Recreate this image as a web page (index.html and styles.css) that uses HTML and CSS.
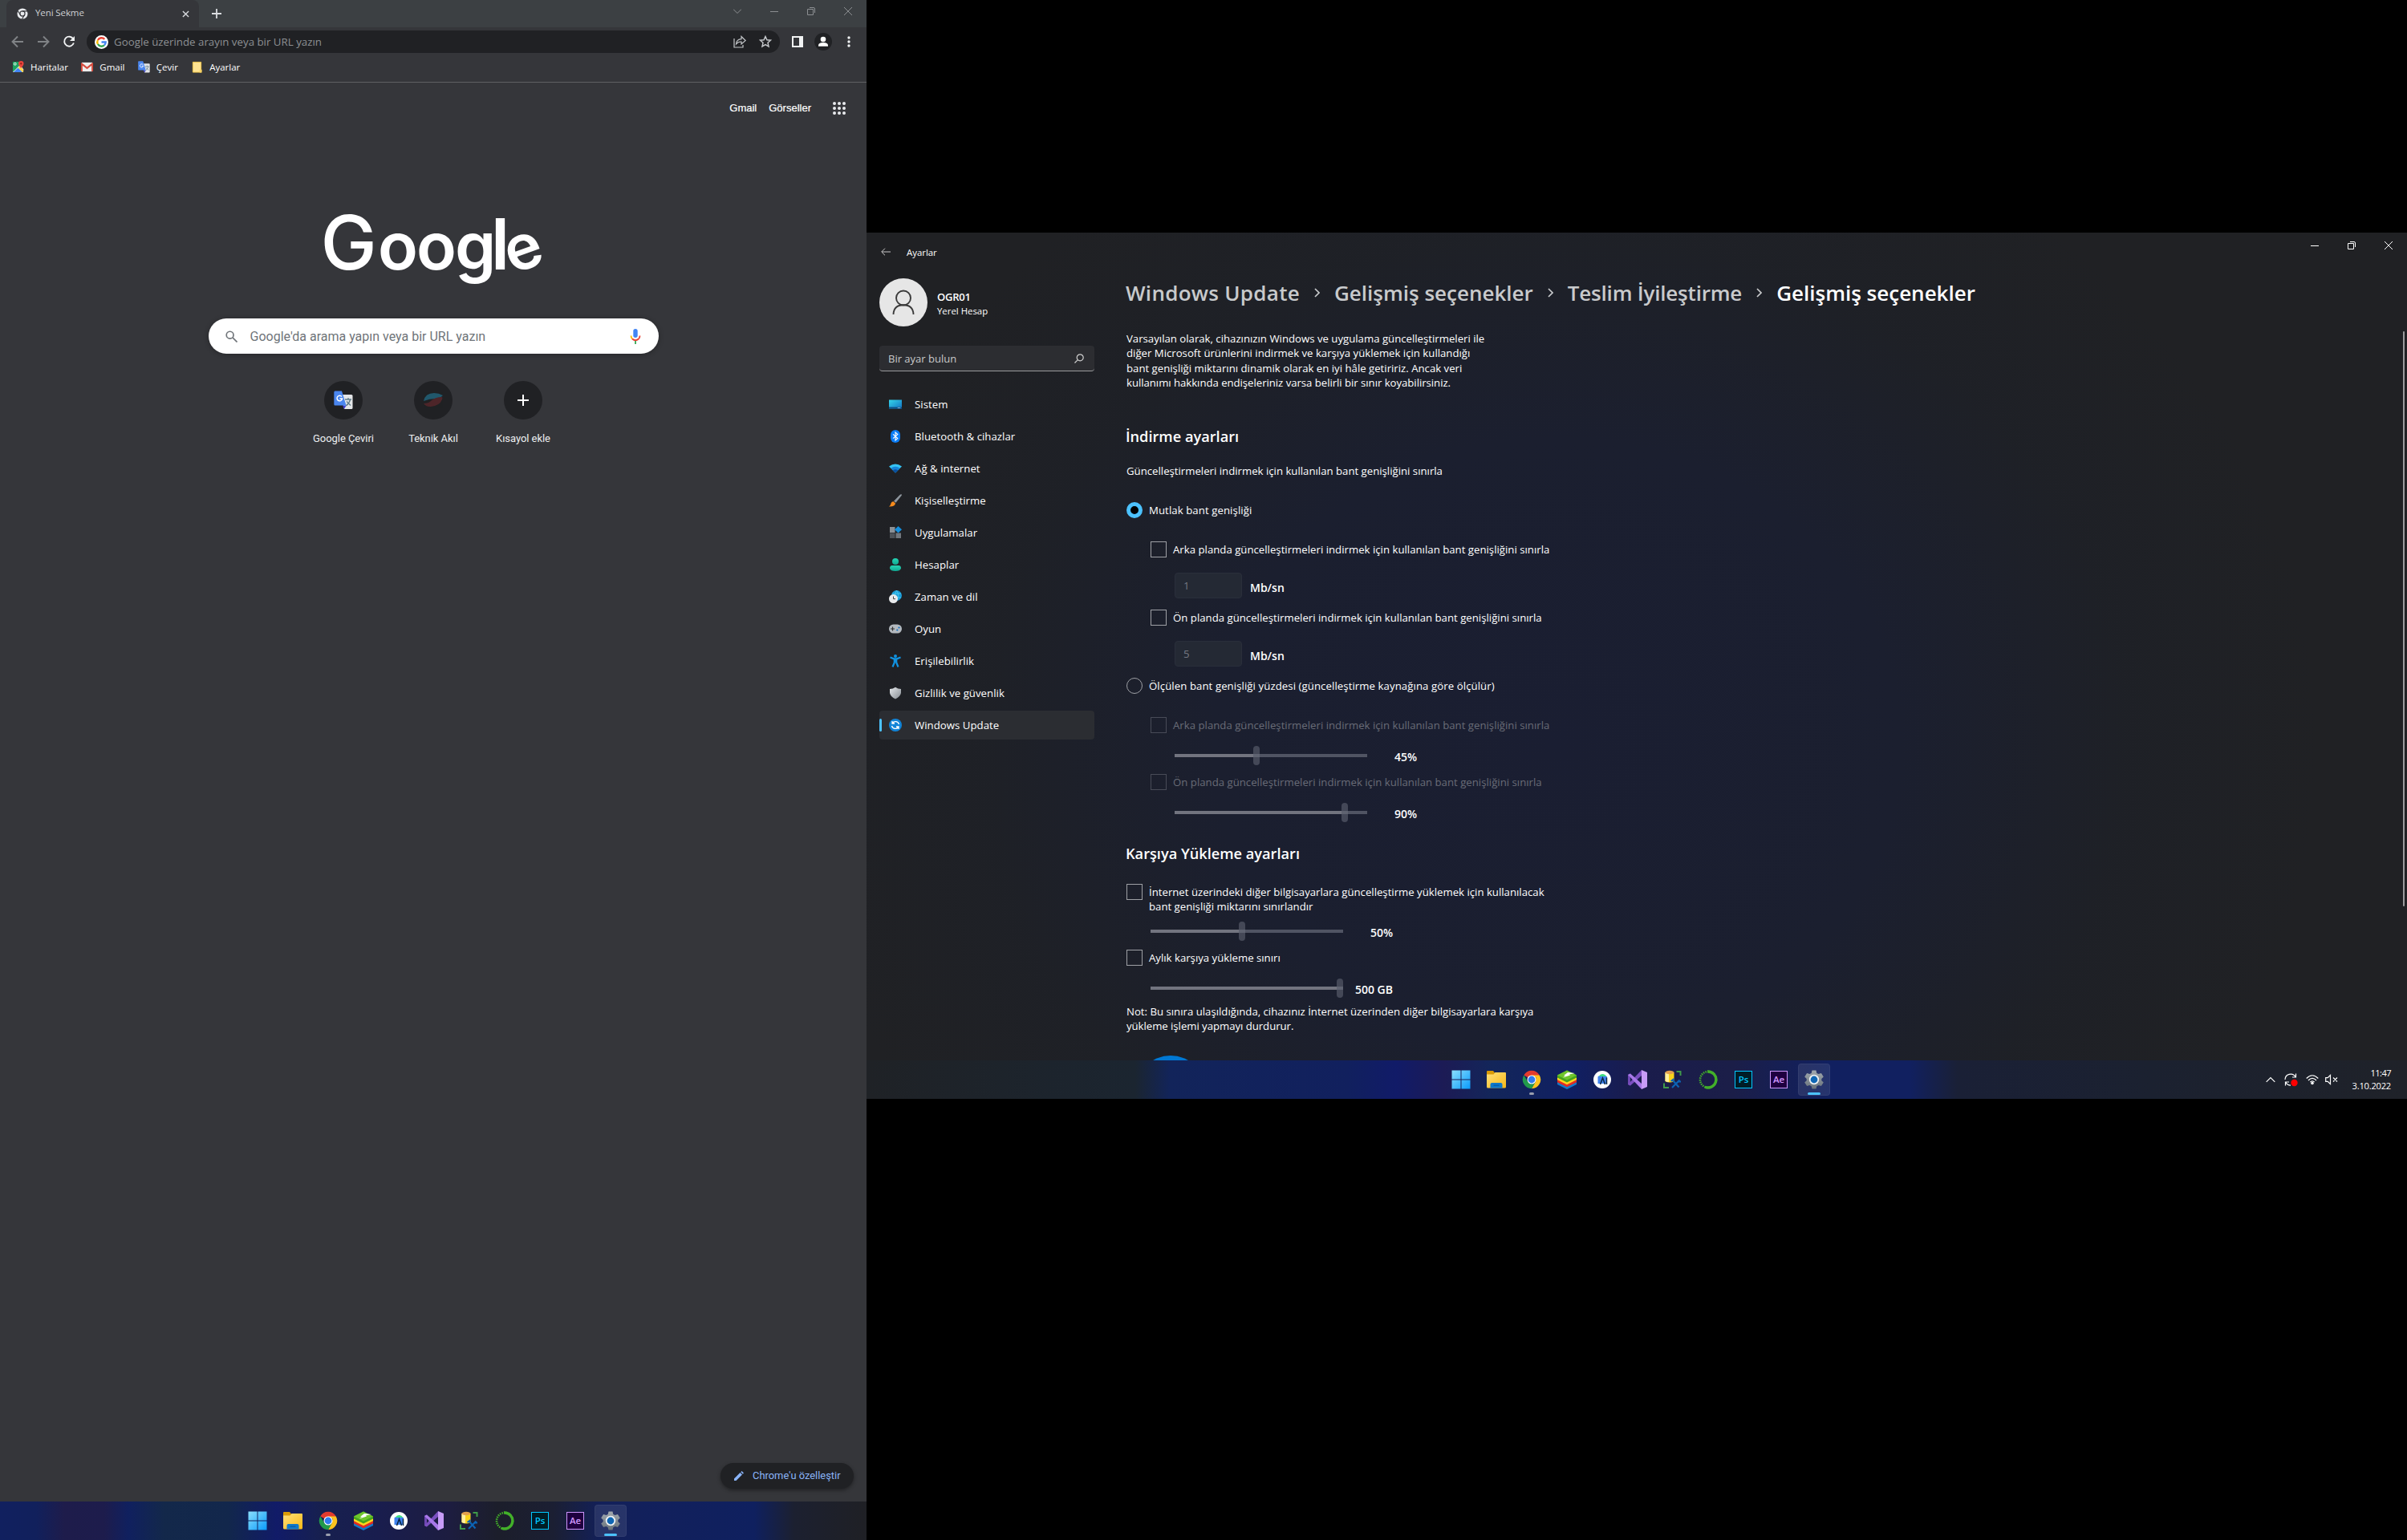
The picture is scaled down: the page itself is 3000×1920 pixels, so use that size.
FILE: index.html
```html
<!DOCTYPE html>
<html lang="tr">
<head>
<meta charset="utf-8">
<title>Masaüstü</title>
<link rel="stylesheet" href="styles.css">
</head>
<body>
<svg class="defs" width="0" height="0" aria-hidden="true">
  <defs>
    <linearGradient id="gwin" x1="0" y1="0" x2="1" y2="1"><stop offset="0" stop-color="#8be0fd"/><stop offset="1" stop-color="#0a9bfb"/></linearGradient>
    <linearGradient id="gfold" x1="0" y1="0" x2="1" y2="1"><stop offset="0" stop-color="#ffe07a"/><stop offset="1" stop-color="#f9b916"/></linearGradient>
    <linearGradient id="gsys" x1="0" y1="0" x2="1" y2="1"><stop offset="0" stop-color="#35d5ea"/><stop offset="1" stop-color="#1273c4"/></linearGradient>
    <linearGradient id="gtl" x1="0" y1="0" x2="0" y2="1"><stop offset="0" stop-color="#25d3b4"/><stop offset="1" stop-color="#10a892"/></linearGradient>
    <linearGradient id="ggrey" x1="0" y1="0" x2="1" y2="1"><stop offset="0" stop-color="#e6e9ec"/><stop offset="1" stop-color="#858b92"/></linearGradient>
    <linearGradient id="ggear" x1="0" y1="0" x2="0" y2="1"><stop offset="0" stop-color="#a2a9af"/><stop offset="1" stop-color="#68727b"/></linearGradient>
  </defs>
  <symbol id="i-start" viewBox="0 0 24 24"><path fill="url(#gwin)" d="M.5.5h11v11H.5zM12.5.5h11v11h-11zM.5 12.5h11v11H.5zM12.5 12.5h11v11h-11z"/></symbol>
  <symbol id="i-folder" viewBox="0 0 24 24"><path fill="#d99a06" d="M0 2.2C0 1.4.5 1 1.200 1H8l2 2.500V6H0z"/><path fill="url(#gfold)" d="M0 5.500h8.500L10.500 3H23q1 0 1 1v17q0 1.500-1.500 1.500h-21Q0 22.500 0 21z"/><path fill="#0f78cb" d="M4.500 22.500V18q0-2 2-2h11q2 0 2 2v4.500z"/><path fill="#085a9f" d="M8.500 18.500h7v1.200h-7z"/></symbol>
  <symbol id="i-chrome" viewBox="0 0 24 24"><path fill="#e23b2e" d="M2.300 6.400A11.200 11.200 0 0 1 21.700 6.400L12 12z"/><path fill="#fcc31e" d="M21.700 6.400A11.200 11.200 0 0 1 12 23.200L16.600 14.800 17.500 9.500 12 6.400z"/><path fill="#219a4b" d="M2.300 6.400A11.200 11.200 0 0 0 12 23.200L16.800 14.800 12 17.400 7.200 14.800z"/><circle cx="12" cy="12" r="5.500" fill="#fff"/><circle cx="12" cy="12" r="4.400" fill="#2f7cf0"/></symbol>
  <symbol id="i-stack" viewBox="0 0 24 24"><path fill="#1179c9" d="M0 15l12 5.500L24 15v3l-12 6L0 18z"/><path fill="#e32b24" d="M0 12l12 5.500L24 12v3.200l-12 6-12-6z"/><path fill="#ffd51e" d="M0 9l12 5.500L24 9v3.200l-12 6-12-6z"/><path fill="#46a51d" d="M12 .5 24 6.500v3l-12 6-12-6v-3z"/><path fill="#6ec52c" d="M12 .5 24 6.500l-12 6-12-6z"/><path fill="#fff" d="M8 7l5-4 9 1-7 1.500 1 1-9 3 3-2.500z"/></symbol>
  <symbol id="i-studio" viewBox="0 0 24 24"><circle cx="12" cy="12" r="11" fill="#fff"/><path fill="#3f82ee" d="M7.500 7.500h9q1.500 0 1.500 1.500v8H6.500V9q0-1.500 1-1.500z"/><path fill="#3ddc84" d="M8 8q1-3 5-3 3 .5 4 3z"/><path d="M9.500 18 12.500 10l3 8M17.500 9.500V18" fill="none" stroke="#0a2540" stroke-width="1.500"/></symbol>
  <symbol id="i-vs" viewBox="0 0 24 24"><path fill="#7048b4" d="M0 6 3 4.500V19.500L0 18z"/><path fill="#7a4fc0" d="M17 0v7L3 19.500 0 18z"/><path fill="#a878e8" d="M0 6 3 4.500 17 17v7z"/><path fill="#c79cf7" d="M17 0l7 3v18l-7 3z"/></symbol>
  <symbol id="i-db" viewBox="0 0 24 24"><path fill="#fbd31b" d="M2.500 3h11v11q-5.500 3-11 0z"/><path fill="#fff0a0" d="M2.500 3h4.500v12q-3 0-4.500-1z"/><ellipse cx="8" cy="3" rx="5.500" ry="2.200" fill="#e3a04d"/><path d="M16.500 2H21.500V7M1 16.500V22H7" fill="none" stroke="#3f9a4a" stroke-width="2"/><path d="M11.500 12.500 19.500 21.500M20.500 12.500 11 22" stroke="#0c63b4" stroke-width="2.200"/><path d="M9.500 14l4-3M18 14.500h4" stroke="#0c63b4" stroke-width="2"/></symbol>
  <symbol id="i-ring" viewBox="0 0 24 24"><path d="M11 2A10 10 0 1 1 8 21.200" fill="none" stroke="#43b02a" stroke-width="3.400"/><circle cx="12" cy="12" r="10" fill="none" stroke="#43b02a" stroke-width="2.600" stroke-dasharray="1.500 1.200"/></symbol>
  <symbol id="i-gear" viewBox="0 0 24 24"><path fill="url(#ggear)" d="M9.500.5h5l.8 3.400 2.200 1.200 3.400-1L23.800 8.500l-2.500 2.400v2.300l2.500 2.300-2.900 4.400-3.400-1-2.200 1.300-.8 3.300h-5l-.8-3.300-2.200-1.300-3.400 1L.2 15.500l2.500-2.300v-2.300L.2 8.500l2.900-4.400 3.400 1 2.200-1.200z"/><circle cx="12" cy="12" r="6.200" fill="#eef1f4"/><circle cx="12" cy="12" r="4.400" fill="#0f66b4"/></symbol>
  <symbol id="i-translate" viewBox="0 0 24 24"><path fill="#e4e6e8" d="M9 5h13q1.500 0 1.500 1.500v15q0 1.500-1.500 1.500H13z"/><path d="M14 11h8M18 9v2M20.500 11.500q-1.500 5-5.500 7.500M16 13.500l5 5" fill="none" stroke="#607d8b" stroke-width="1.300"/><path fill="#3a3ad0" d="M11 18.500h4.500L13 23z"/><path fill="#4a86f0" d="M1.500.5H10l5.500 18h-14Q.3 18.500.3 17V2Q.3.5 1.500.5z"/><path d="M10 7.500A3.300 3.300 0 1 0 10.600 10H7.500" fill="none" stroke="#fff" stroke-width="1.500"/></symbol>
  <symbol id="i-g" viewBox="0 0 16 16"><circle cx="8" cy="8" r="8" fill="#fff"/><g fill="none" stroke-width="2.200"><path stroke="#ea4335" d="M11.600 4.600A4.900 4.900 0 0 0 3.700 5.600"/><path stroke="#fbbc05" d="M3.700 5.600A4.900 4.900 0 0 0 3.700 10.400"/><path stroke="#34a853" d="M3.700 10.400A4.900 4.900 0 0 0 11.200 11.700"/><path stroke="#4285f4" d="M11.200 11.700A4.900 4.900 0 0 0 12.900 8H8"/></g></symbol>
</svg>

<div class="desktop">
  <section class="screen portrait">
    <header class="tabstrip">
      <div class="tab">
        <svg class="fav" viewBox="0 0 16 16"><circle cx="8" cy="8" r="7.500" fill="#e8eaed"/><circle cx="8" cy="8" r="3.500" fill="#e8eaed" stroke="#35363a" stroke-width="1.300"/><path d="M8 4.500h7M5 9.800 1.500 4M11 9.800 7.500 15.500" stroke="#35363a" stroke-width="1.300"/></svg>
        <span class="t tab-title">Yeni Sekme</span>
        <svg class="tab-x" viewBox="0 0 10 10"><path d="M1 1l8 8M9 1 1 9" stroke="#dadce0" stroke-width="1.500"/></svg>
      </div>
      <svg class="newtab" viewBox="0 0 12 12"><path d="M6 0v12M0 6h12" stroke="#dadce0" stroke-width="1.800"/></svg>
      <div class="winbtns dim">
        <svg viewBox="0 0 10 10"><path d="M0 2.500l5 5 5-5"/></svg>
        <svg viewBox="0 0 10 10"><path d="M0 5.500h10"/></svg>
        <svg viewBox="0 0 10 10"><path d="M.5 2.500h7v7h-7zM3 .5h5q1.500 0 1.500 1.500v5"/></svg>
        <svg viewBox="0 0 10 10"><path d="M0 0l10 10M10 0 0 10"/></svg>
      </div>
    </header>
    <div class="toolbar">
      <svg class="nav" viewBox="0 0 16 16"><path d="M15 8H2M8 1.500 1.500 8 8 14.500" stroke="#808386"/></svg>
      <svg class="nav" viewBox="0 0 16 16"><path d="M1 8h13M8 1.500 14.500 8 8 14.500" stroke="#808386"/></svg>
      <svg class="nav reload" viewBox="0 0 16 16"><path d="M13.300 4.500A6 6 0 1 0 13.900 9.500" stroke="#f1f3f4"/><path d="M15 1v6H9z" fill="#f1f3f4" stroke="none"/></svg>
      <div class="omnibox">
        <svg width="17" height="17"><use href="#i-g"/></svg>
        <span class="t omni-text">Google üzerinde arayın veya bir URL yazın</span>
        <svg class="share" viewBox="0 0 16 16"><path d="M1 4v11h11v-3M3.500 11Q4 5 10 4.700V1.500L15.200 6.500 10 11V8Q6 7.800 3.500 11z"/></svg>
        <svg class="star" viewBox="0 0 16 16"><path d="M8 1.500l1.900 4.300 4.600.4-3.500 3.100 1 4.600L8 11.500l-4 2.400 1-4.600L1.500 6.200l4.600-.4z"/></svg>
      </div>
      <svg class="panel" viewBox="0 0 14 14"><path fill="#f1f3f4" fill-rule="evenodd" d="M0 0h14v14H0zM2 2v10h7V2z"/></svg>
      <svg class="profile" viewBox="0 0 22 22"><circle cx="11" cy="11" r="11" fill="#202124"/><circle cx="11" cy="8" r="3.300" fill="#fff"/><path fill="#fff" d="M5 16.800v-1.300q0-3.500 6-3.500t6 3.500v1.300z"/></svg>
      <svg class="dots" viewBox="0 0 4 14"><g fill="#f1f3f4"><circle cx="2" cy="2" r="1.700"/><circle cx="2" cy="7" r="1.700"/><circle cx="2" cy="12" r="1.700"/></g></svg>
    </div>
    <div class="bookmarks">
      <a><svg viewBox="0 0 16 16"><path fill="#1da261" d="M1 1h10v5l-10 9z"/><path fill="#f5f5f5" d="M1 15 11 5l4 6v4z"/><path fill="#4285f4" d="M2 15l6-6 6 6z"/><path fill="#ffd54a" d="M8 9l3-3 4 6v3h-1z"/><path fill="#e8453c" d="M12 0a3.500 3.500 0 0 1 3.500 3.500Q15.500 6 12 9.500 8.500 6 8.500 3.500A3.500 3.500 0 0 1 12 0z"/><circle cx="4" cy="4" r="1.500" fill="none" stroke="#fff"/><circle cx="12" cy="3.500" r="1.200" fill="#8c1d17"/></svg><span class="t">Haritalar</span></a>
      <a><svg viewBox="0 0 16 16"><path fill="#eee" d="M1 2h14v12H1z"/><path fill="#d54b3d" d="M1 2.500Q.5 2 0 3v10.500l2 .5V6l6 4.800L14 6v8l2-.5V3q-.5-1-1-.5L8 8z"/></svg><span class="t">Gmail</span></a>
      <a><svg viewBox="0 0 24 24"><use href="#i-translate"/></svg><span class="t">Çevir</span></a>
      <a><svg viewBox="0 0 16 16"><path fill="#fee391" stroke="#f0c64a" d="M2.500 1.500h11V15h-11z"/><path fill="#f8d465" d="M11.500 11.500h3v4h-3z"/></svg><span class="t">Ayarlar</span></a>
    </div>
    <main class="ntp">
      <div class="ntp-links"><span class="t">Gmail</span><span class="t n2">Görseller</span>
        <svg viewBox="0 0 16 16"><g fill="#e8eaed"><circle cx="2" cy="2" r="2"/><circle cx="8" cy="2" r="2"/><circle cx="14" cy="2" r="2"/><circle cx="2" cy="8" r="2"/><circle cx="8" cy="8" r="2"/><circle cx="14" cy="8" r="2"/><circle cx="2" cy="14" r="2"/><circle cx="8" cy="14" r="2"/><circle cx="14" cy="14" r="2"/></g></svg>
      </div>
      <svg class="logo" viewBox="0 0 272 92"><text y="69" fill="#fff"><tspan class="lg-cap" x="-4.500">G</tspan><tspan class="lg-low" x="67 115 163">oog</tspan><tspan class="lg-asc" x="208">l</tspan><tspan class="lg-e" x="234.500" y="75" rotate="-20">e</tspan></text></svg>
      <div class="search">
        <svg class="mag" viewBox="0 0 16 16"><circle cx="6" cy="6" r="4.700"/><path d="M9.500 9.500l6 6"/></svg>
        <span class="t ph">Google'da arama yapın veya bir URL yazın</span>
        <svg class="mic" viewBox="0 0 14 20"><rect x="4.300" y="1" width="5.400" height="11" rx="2.700" fill="#4285f4"/><path d="M1.500 9.500Q1.500 12 3 13.500" stroke="#fbbc04"/><path d="M3 13.500Q7 17 11 13.500" stroke="#ea4335"/><path d="M11 13.500Q12.500 12 12.500 9.500" stroke="#ea4335"/><path d="M7 16v4" stroke="#34a853"/></svg>
      </div>
      <div class="tiles">
        <div class="tile"><i><svg width="24" height="24"><use href="#i-translate"/></svg></i><span class="t">Google Çeviri</span></div>
        <div class="tile"><i><svg width="26" height="20" viewBox="0 0 26 20"><path d="M1 11Q3 1 14 1q6 0 11 3-4 4-9 4Q8 8 1 11z" fill="#236f8c"/><path d="M1 14q6 0 9-3 5-5 14-5 1 1 0 3-3 8-14 9Q4 18.500 1 14z" fill="#62272d"/><path d="M2 0v20M4 0v20M6 0v20M8 0v20M10 0v20M12 0v20M14 0v20M16 0v20M18 0v20M20 0v20M22 0v20M24 0v20" stroke="#202124" stroke-width=".6"/></svg></i><span class="t">Teknik Akıl</span></div>
        <div class="tile"><i><svg width="14" height="14" viewBox="0 0 14 14"><path d="M7 0v14M0 7h14" stroke="#fff" stroke-width="2"/></svg></i><span class="t">Kısayol ekle</span></div>
      </div>
      <button class="customize"><svg viewBox="0 0 12 12"><path fill="#8ab4f8" d="M0 9.500 7.500 2 10 4.500 2.500 12H0zM8.300 1.200 9.500 0 12 2.500l-1.200 1.200z"/></svg><span class="t">Chrome'u özelleştir</span></button>
    </main>
    <footer class="taskbar tb-left">
      <div class="apps">
        <i><svg><use href="#i-start"/></svg></i><i><svg><use href="#i-folder"/></svg></i><i class="open"><svg><use href="#i-chrome"/></svg></i><i><svg><use href="#i-stack"/></svg></i><i><svg><use href="#i-studio"/></svg></i><i><svg><use href="#i-vs"/></svg></i><i><svg><use href="#i-db"/></svg></i><i><svg><use href="#i-ring"/></svg></i><i><b class="ps">Ps</b></i><i><b class="ae">Ae</b></i><i class="active"><svg><use href="#i-gear"/></svg></i>
      </div>
    </footer>
  </section>

  <section class="screen landscape">
    <div class="settings">
      <header class="titlebar">
        <svg class="back" viewBox="0 0 12 10"><path d="M12 5H1M5 .7.700 5 5 9.300"/></svg>
        <span class="t tt">Ayarlar</span>
        <div class="winbtns">
          <svg viewBox="0 0 10 10"><path d="M0 5.500h10"/></svg>
          <svg viewBox="0 0 10 10"><path d="M.5 2.500h7v7h-7zM3 .5h5q1.500 0 1.500 1.500v5"/></svg>
          <svg viewBox="0 0 10 10"><path d="M0 0l10 10M10 0 0 10"/></svg>
        </div>
      </header>
      <div class="body">
        <aside>
          <div class="user">
            <svg viewBox="0 0 60 60"><circle cx="30" cy="30" r="30" fill="#e6e6e6"/><g fill="none" stroke="#3a3a3a" stroke-width="1.900"><circle cx="30" cy="24.500" r="9"/><path d="M17.500 45Q18 33.300 30 33.300T42.500 45"/></g></svg>
            <div><span class="t u1">OGR01</span><span class="t u2">Yerel Hesap</span></div>
          </div>
          <div class="find"><span class="t">Bir ayar bulun</span><svg viewBox="0 0 12 12"><circle cx="7.200" cy="4.800" r="4"/><path d="M4.300 7.700.500 11.500"/></svg></div>
          <nav>
            <a><svg viewBox="0 0 16 16"><path fill="url(#gsys)" d="M0 2.500h16v11H0z"/><path fill="#0d4f86" d="M0 11.500h16v2H0z"/><path fill="#cfe8ff" d="M11 12h1v1h-1zM13 12h1v1h-1z"/></svg><span class="t">Sistem</span></a>
            <a><svg viewBox="0 0 16 16"><rect x="2" width="12" height="16" rx="6" fill="#0a7cf5"/><path d="M5 5.300 10.800 10.600 8 13V3l2.800 2.400L5 10.700" fill="none" stroke="#fff" stroke-width="1.100"/></svg><span class="t">Bluetooth &amp; cihazlar</span></a>
            <a><svg viewBox="0 0 16 16"><path fill="#35c3f3" d="M0 5.500Q8-.5 16 5.500L8 13.500z"/><path fill="#1683d8" d="M2.300 7.800Q8 3.500 13.700 7.800L8 13.500z"/><path fill="#0a4f9e" d="M4.800 10.300Q8 8 11.200 10.300L8 13.500z"/></svg><span class="t">Ağ &amp; internet</span></a>
            <a><svg viewBox="0 0 16 16"><path fill="#8d959d" d="M15.500.3Q16.300 1 15.500 2L8.500 10.800 6 8.800 13.500 1Q14.700-.2 15.500.3z"/><path fill="#f58a1c" d="M5.500 9.300 8 11.500Q7.500 16 0 15.500 2 14.500 2.300 12 3 9 5.500 9.300z"/></svg><span class="t">Kişiselleştirme</span></a>
            <a><svg viewBox="0 0 16 16"><path fill="#8b9096" d="M1 1h6.500v7H1z"/><path fill="#4e5359" d="M1 8.500h6.500V15H1z"/><path fill="#71777e" d="M8.500 8.500H15V15H8.500z"/><path fill="#1490df" d="M11.500 0 16 4.300l-4.500 4.200L7 4.300z"/></svg><span class="t">Uygulamalar</span></a>
            <a><svg viewBox="0 0 16 16"><g fill="url(#gtl)"><circle cx="8" cy="4" r="4"/><path d="M1 12.500Q1 9 4 9h8q3 0 3 3.500Q14 16 8 16T1 12.500z"/></g></svg><span class="t">Hesaplar</span></a>
            <a><svg viewBox="0 0 16 16"><circle cx="9.500" cy="6.500" r="6.500" fill="#1a9bd8"/><path d="M9.500 0Q6 6 9.500 13M9.500 0q4 6 0 13M4 4h11M4 9h11" stroke="#4fd2f2" fill="none" stroke-width=".8"/><circle cx="5.500" cy="10.500" r="5.500" fill="#e9ebed"/><path d="M5.500 7.500v3.200H8" stroke="#444" fill="none"/></svg><span class="t">Zaman ve dil</span></a>
            <a><svg viewBox="0 0 16 16"><rect y="2.500" width="16" height="11" rx="5.500" fill="#b3b9bf"/><path d="M2 8h5M4.500 5.500v5" stroke="#333" stroke-width="1.200"/><circle cx="12.500" cy="6.500" r="1.100" fill="#0f6cbd"/><circle cx="10.300" cy="9.500" r="1.100" fill="#0f6cbd"/></svg><span class="t">Oyun</span></a>
            <a><svg viewBox="0 0 16 16"><circle cx="8" cy="2" r="2" fill="#1192e0"/><path d="M1.500 3.500 6 5.300h4l4.500-1.800M8 5v4.500M6.800 5.500V10L4.500 15.500M9.200 5.500V10l2.300 5.500" stroke="#1192e0" stroke-width="2.200" fill="none"/></svg><span class="t">Erişilebilirlik</span></a>
            <a><svg viewBox="0 0 16 16"><path fill="url(#ggrey)" d="M8 .8Q11 3 15 3v5q-1 5-7 7.500Q2 13 1 8V3q4 0 7-2.200z"/></svg><span class="t">Gizlilik ve güvenlik</span></a>
            <a class="on"><svg viewBox="0 0 16 16"><circle cx="8" cy="8" r="8" fill="#1184d8"/><path d="M12.500 7A4.600 4.600 0 0 0 4.300 5.500M3.500 9a4.600 4.600 0 0 0 8.200 1.500M4 3v3h3M12 13v-3H9" fill="none" stroke="#fff" stroke-width="1.300"/></svg><span class="t">Windows Update</span></a>
          </nav>
        </aside>
        <main class="page">
          <h1><span class="t h1a">Windows Update</span><svg viewBox="0 0 7 12"><path d="M1 1l5 5-5 5"/></svg><span class="t">Gelişmiş seçenekler</span><svg viewBox="0 0 7 12"><path d="M1 1l5 5-5 5"/></svg><span class="t h1c">Teslim İyileştirme</span><svg viewBox="0 0 7 12"><path d="M1 1l5 5-5 5"/></svg><span class="t cur">Gelişmiş seçenekler</span></h1>
          <p class="intro"><span class="t">Varsayılan olarak, cihazınızın Windows ve uygulama güncelleştirmeleri ile</span><br><span class="t">diğer Microsoft ürünlerini indirmek ve karşıya yüklemek için kullandığı</span><br><span class="t">bant genişliği miktarını dinamik olarak en iyi hâle getiririz. Ancak veri</span><br><span class="t tight">kullanımı hakkında endişeleriniz varsa belirli bir sınır koyabilirsiniz.</span></p>
          <h2 class="h-down"><span class="t">İndirme ayarları</span></h2>
          <p class="sub"><span class="t">Güncelleştirmeleri indirmek için kullanılan bant genişliğini sınırla</span></p>
          <label class="row r-radio"><i class="radio sel"></i><span class="t loose">Mutlak bant genişliği</span></label>
          <label class="row in r-after"><i class="box"></i><span class="t">Arka planda güncelleştirmeleri indirmek için kullanılan bant genişliğini sınırla</span></label>
          <div class="num"><span class="field">1</span><strong class="t mb">Mb/sn</strong></div>
          <label class="row in r-tight"><i class="box"></i><span class="t">Ön planda güncelleştirmeleri indirmek için kullanılan bant genişliğini sınırla</span></label>
          <div class="num"><span class="field">5</span><strong class="t mb">Mb/sn</strong></div>
          <label class="row r-tight"><i class="radio"></i><span class="t loose">Ölçülen bant genişliği yüzdesi (güncelleştirme kaynağına göre ölçülür)</span></label>
          <label class="row in r-after off"><i class="box"></i><span class="t">Arka planda güncelleştirmeleri indirmek için kullanılan bant genişliğini sınırla</span></label>
          <div class="slide deep"><div class="track"><i style="width:98px"></i><b></b></div><strong class="t">45%</strong></div>
          <label class="row in r-slide off"><i class="box"></i><span class="t">Ön planda güncelleştirmeleri indirmek için kullanılan bant genişliğini sınırla</span></label>
          <div class="slide deep"><div class="track"><i style="width:208px"></i><b></b></div><strong class="t">90%</strong></div>
          <h2 class="h-up"><span class="t">Karşıya Yükleme ayarları</span></h2>
          <label class="row r-two"><i class="box"></i><span class="two"><span class="t">İnternet üzerindeki diğer bilgisayarlara güncelleştirme yüklemek için kullanılacak</span><br><span class="t">bant genişliği miktarını sınırlandır</span></span></label>
          <div class="slide near"><div class="track"><i style="width:110px"></i><b></b></div><strong class="t">50%</strong></div>
          <label class="row r-slide"><i class="box"></i><span class="t">Aylık karşıya yükleme sınırı</span></label>
          <div class="slide"><div class="track"><i style="width:232px"></i><b></b></div><strong class="t">500 GB</strong></div>
          <p class="note"><span class="t">Not: Bu sınıra ulaşıldığında, cihazınız İnternet üzerinden diğer bilgisayarlara karşıya</span><br><span class="t tight">yükleme işlemi yapmayı durdurur.</span></p>
          <div class="help"></div>
        </main>
        <div class="scroll"></div>
      </div>
    </div>
    <footer class="taskbar tb-right">
      <div class="apps">
        <i><svg><use href="#i-start"/></svg></i><i><svg><use href="#i-folder"/></svg></i><i class="open"><svg><use href="#i-chrome"/></svg></i><i><svg><use href="#i-stack"/></svg></i><i><svg><use href="#i-studio"/></svg></i><i><svg><use href="#i-vs"/></svg></i><i><svg><use href="#i-db"/></svg></i><i><svg><use href="#i-ring"/></svg></i><i><b class="ps">Ps</b></i><i><b class="ae">Ae</b></i><i class="active"><svg><use href="#i-gear"/></svg></i>
      </div>
      <div class="tray">
        <svg width="12" height="8" viewBox="0 0 12 8"><path d="M.700 6.800 6 1.500l5.300 5.300"/></svg>
        <svg class="sync" width="18" height="18" viewBox="0 0 18 18"><path d="M2 9A7 7 0 0 1 15 5.500M15.500 1.500v4.500H11M2.500 16.500V12H7M3 12.500Q5 16 9 16.200"/><circle cx="13.500" cy="13" r="4.200" fill="#f00" stroke="none"/></svg>
        <svg class="wifi" width="16" height="14" viewBox="0 0 16 14"><path d="M.700 5.500Q8-2 15.300 5.500M3 8Q8 2.800 13 8M5.300 10.200Q8 7.500 10.700 10.200"/><circle cx="8" cy="11.500" r="1.800" fill="#fff" stroke="none"/></svg>
        <svg class="mute" width="16" height="14" viewBox="0 0 16 14"><path d="M.700 4.700h2.500L6.500 1.500v11L3.200 9.300H.700zM10 4.500l5 5M15 4.500l-5 5"/></svg>
        <div class="clock"><span class="t c1">11:47</span><span class="t c2">3.10.2022</span></div>
      </div>
    </footer>
  </section>
</div>
</body>
</html>
```
FILE: styles.css
```css
* { box-sizing: border-box; }
body { margin: 0; background: #000; width: 3000px; height: 1920px; overflow: hidden; font-family: "Open Sans", "Noto Sans", sans-serif; color: #fff; }
svg { display: block; flex: none; }
.defs { position: absolute; }
.t { white-space: nowrap; }
i { font-style: normal; }
h1, h2, p { margin: 0; }
.desktop { display: flex; align-items: flex-start; }

/* Portrait screen: browser */
.portrait { width: 1080px; height: 1920px; display: flex; flex-direction: column; background: #35363a; }
.tabstrip { height: 34px; background: #3c4043; display: flex; align-items: flex-start; padding-left: 8px; }
.tab { width: 240px; height: 34px; background: #35363a; border-radius: 8px 8px 0 0; display: flex; align-items: center; padding: 0 12px 0 13px; }
.fav { width: 14px; height: 14px; }
.tab-title { font-size: 11.500px; line-height: 16px; color: #cfd1d4; margin-left: 9px; padding-bottom: 2px; letter-spacing: -.1px; flex: 1; }
.tab-x { width: 9px; height: 9px; }
.newtab { width: 12px; height: 12px; margin: 11px 0 0 16px; }
.winbtns { margin-left: auto; display: flex; gap: 36px; padding: 9px 18px 0 0; }
.winbtns svg { width: 10px; height: 10px; fill: none; stroke: #fff; stroke-width: 1; }
.winbtns.dim svg { stroke: #8c8f92; }
.toolbar { height: 36px; display: flex; align-items: center; padding-left: 14px; }
.nav { width: 16px; height: 16px; margin-right: 16px; fill: none; stroke-width: 1.900; }
.reload { margin-right: 14px; }
.omnibox { width: 864px; height: 28px; border-radius: 14px; background: #202124; display: flex; align-items: center; padding: 0 10px; }
.omni-text { font-size: 13.300px; color: #8d9093; margin-left: 7px; flex: 1; }
.share, .star { width: 16px; height: 16px; fill: none; stroke: #c4c7ca; stroke-width: 1.200; }
.star { margin-left: 16px; stroke-width: 1.500; }
.panel { width: 14px; height: 14px; margin-left: 15px; }
.profile { width: 22px; height: 22px; margin-left: 14px; }
.dots { width: 4px; height: 14px; margin-left: 19px; }
.bookmarks { height: 33px; border-bottom: 1px solid #5f6063; display: flex; padding: 6px 0 0 15px; }
.bookmarks a { display: flex; align-items: center; height: 15px; gap: 8px; font-size: 11.500px; }
.bookmarks a + a { margin-left: 16.300px; }
.bookmarks svg { width: 15px; height: 15px; }
.ntp { flex: 1; display: flex; flex-direction: column; align-items: center; position: relative; }
.ntp-links { align-self: flex-end; display: flex; align-items: center; height: 20px; margin: 22px 26px 0 0; font: 13px/20px "Liberation Sans", Arial, sans-serif; -webkit-text-stroke: .2px #fff; }
.n2 { margin-left: 15px; }
.ntp-links svg { width: 16px; height: 16px; margin-left: 27px; }
.logo { width: 272px; height: 92px; margin-top: 122px; overflow: visible; font-family: Inter, sans-serif; font-weight: 500; }
.lg-cap { font-size: 94px; }
.lg-low { font-size: 82px; font-weight: 600; }
.lg-e { font-size: 78px; font-weight: 600; }
.lg-asc { font-size: 88px; font-weight: 600; }
.search { width: 561px; height: 44px; margin-top: 38px; margin-left: 1px; background: #fff; border-radius: 22px; display: flex; align-items: center; padding: 0 22px 0 21px; box-shadow: 0 1px 6px rgba(0,0,0,.3); }
.mag { width: 15px; height: 15px; fill: none; stroke: #70757a; stroke-width: 1.800; }
.ph { font: 16px/20px Roboto, sans-serif; color: #70757a; margin-left: 15.500px; padding-top: 1px; flex: 1; }
.mic { width: 14px; height: 20px; fill: none; stroke-width: 1.800; }
.tiles { display: flex; margin-top: 34px; }
.tile { width: 112px; display: flex; flex-direction: column; align-items: center; font: 13px/16px Roboto, sans-serif; letter-spacing: -.05px; color: #eceef0; }
.tile i { width: 48px; height: 48px; border-radius: 50%; background: #202124; display: grid; place-items: center; margin-bottom: 16px; }
.customize { position: absolute; right: 16px; bottom: 16px; width: 166px; height: 32px; border: 0; border-radius: 16px; background: #202124; display: flex; align-items: center; padding: 0 0 0 17px; font: 12.900px/16px Roboto, sans-serif; color: #8ab4f8; box-shadow: 0 2px 5px rgba(0,0,0,.4); }
.customize svg { width: 12px; height: 12px; margin-right: 11px; }

/* Taskbar */
.taskbar { height: 48px; display: flex; position: relative; }
.tb-left { padding-left: 301px; background: linear-gradient(90deg, #11205f 0, #11205c 45px, #1e1c4b 80px, #1d1c4c 130px, #10205f 160px, #13284a 205px, #12274c 285px, #111b68 345px, #17204f 400px, #191d4e 470px, #1d1d40 560px, #1c1e2b 620px, #1b1f33 690px, #13205a 750px, #0f205f 940px, #1c2030 990px, #1f2025 1080px); }
.tb-right { padding-left: 721px; background: linear-gradient(90deg, #1f2226 0, #1b2530 335px, #12245a 378px, #11205e 600px, #111b68 660px, #1c1b55 720px, #13265a 780px, #101f62 880px, #1a1c4c 960px, #1b1e48 1080px, #112060 1200px, #112060 1300px, #1a2036 1360px, #1b2130 1600px, #1f2229 1920px); }
.apps { display: flex; gap: 4px; }
.apps i { width: 40px; height: 40px; margin-top: 4px; display: grid; place-items: center; border-radius: 4px; position: relative; }
.apps svg { width: 24px; height: 24px; }
.apps .active { background: rgba(255,255,255,.09); box-shadow: inset 0 0 0 1px rgba(255,255,255,.05); }
.apps .active::after, .apps .open::after { content: ""; position: absolute; bottom: 1px; left: 12px; width: 16px; height: 3px; border-radius: 2px; background: #4cc2ff; }
.apps .open::after { left: 17px; width: 6px; background: #9a9fae; }
.ps, .ae { width: 22px; height: 22px; border: 1.500px solid #00c8ff; background: #001d26; color: #00c8ff; font: 600 11.500px/19px "Open Sans", sans-serif; text-align: center; }
.ae { border-color: #cf96fd; background: #1f0040; color: #cf96fd; }

/* Landscape screen: settings */
.landscape { width: 1920px; height: 1080px; margin-top: 290px; display: flex; flex-direction: column; }
.settings { height: 1032px; overflow: hidden; background: radial-gradient(ellipse 950px 850px at 860px 640px, #1a1e32 0, #1b1f2f 45%, rgba(29,32,40,.6) 75%, rgba(32,33,36,0) 100%), #202124; }
.titlebar { height: 48px; display: flex; padding-left: 18px; }
.back { width: 12px; height: 10px; margin-top: 19px; fill: none; stroke: #c8c8c8; }
.tt { font-size: 11.400px; line-height: 16px; margin: 17px 0 0 20px; }
.titlebar .winbtns { padding-top: 11px; }
.body { display: flex; padding-left: 16px; }
aside { width: 268px; }
.user { display: flex; align-items: center; gap: 12px; margin-top: 9px; }
.user svg { width: 60px; height: 60px; }
.user div { display: flex; flex-direction: column; margin-top: 3px; }
.user span { line-height: 18px; }
.u1 { font-size: 13px; font-weight: 600; letter-spacing: -.2px; }
.u2 { font-size: 11.400px; }
.find { height: 32px; margin-top: 24px; border-radius: 4px; background: #2c2d31; border-bottom: 1px solid #9a9b9d; display: flex; align-items: center; justify-content: space-between; padding: 0 13px 0 11px; font-size: 13px; color: #c9cacb; }
.find svg { width: 12px; height: 12px; fill: none; stroke: #d0d0d0; stroke-width: 1.200; }
nav { display: flex; flex-direction: column; gap: 4px; margin-top: 23px; font-size: 13.200px; letter-spacing: .04px; }
nav a { height: 36px; border-radius: 4px; display: flex; align-items: center; gap: 16px; padding-left: 12px; position: relative; }
nav svg { width: 16px; height: 16px; }
nav .on { background: #2b2d32; }
nav .on::before { content: ""; position: absolute; left: 0; top: 10px; width: 3px; height: 16px; border-radius: 2px; background: #4cc2ff; }
.page { width: 1591px; margin-left: 40px; font-size: 13.200px; }
h1 { height: 40px; margin-top: 7px; display: flex; align-items: center; font-size: 26px; font-weight: 600; color: #c8cacc; }
h1 svg { width: 7px; height: 12px; margin: 0 18px; fill: none; stroke: #c8cacc; stroke-width: 1.700; }
.h1a { letter-spacing: .28px; margin-left: -1px; }
.h1c { letter-spacing: -.2px; }
.cur { color: #fff; }
.tight { letter-spacing: -.04px; }
.loose { letter-spacing: .08px; }
.intro { height: 74px; margin-top: 28px; line-height: 18.300px; }
h2 { height: 28px; line-height: 30px; font-size: 18.200px; font-weight: 600; margin-left: -1px; }
.h-down { margin-top: 42px; }
.h-up { margin-top: 26px; line-height: 26px; }
.sub { height: 20px; line-height: 21px; margin-top: 20px; }
.row { display: flex; gap: 8px; height: 20px; line-height: 21px; }
.in { padding-left: 30px; line-height: 20px; letter-spacing: .01px; }
.r-radio, .r-after { margin-top: 29px; }
.r-tight { margin-top: 14px; }
.r-slide { margin-top: 11px; line-height: 20px; }
.r-two { margin-top: 23px; height: 38px; }
.two { line-height: 18px; padding-top: 1px; height: 38px; }
.box, .radio { width: 20px; height: 20px; border: 1px solid #9fa1a6; flex: none; }
.radio { border-radius: 50%; }
.radio.sel { border: 5px solid #4cc2ff; background: #000; }
.off { color: #696c77; }
.off .box { border-color: #484b57; }
.num { display: flex; margin-top: 19px; padding-left: 60px; height: 32px; }
.field { width: 84px; height: 32px; border-radius: 4px; background: #242934; border: 1px solid #2a2f3b; color: #767983; line-height: 30px; padding-left: 10px; }
.mb { margin-left: 10px; line-height: 38px; }
strong { font-weight: 600; font-size: 14px; }
.slide { display: flex; height: 24px; margin-top: 16px; padding-left: 30px; align-items: center; width: 332px; }
.deep { padding-left: 60px; width: 362px; }
.near { margin-top: 9px; }
.track { width: 240px; height: 24px; display: flex; align-items: center; background: linear-gradient(#505463, #505463) center / 100% 4px no-repeat; }
.track i { height: 4px; background: #72747f; }
.track b { width: 8px; height: 24px; border-radius: 4px; background: rgba(110,114,128,.5); }
.slide strong { margin-left: auto; line-height: 28px; padding-top: 4px; }
.note { margin-top: 8px; line-height: 18px; }
.help { width: 86px; height: 86px; border-radius: 50%; background: #0078d4; margin: 28px 0 0 12px; }
.scroll { width: 2px; height: 717px; margin-top: 75px; background: #9b9b9d; border-radius: 1px; }
.tray { margin-left: auto; display: flex; align-items: center; padding-right: 20px; }
.tray svg { fill: none; stroke: #fff; stroke-width: 1.200; }
.sync { margin-left: 10px; }
.wifi { margin-left: 10px; }
.mute { margin-left: 8px; }
.clock { width: 66px; display: flex; flex-direction: column; align-items: flex-end; font-size: 11.200px; line-height: 16px; }
.c1 { letter-spacing: -.6px; }
.c2 { letter-spacing: -.25px; }
```
